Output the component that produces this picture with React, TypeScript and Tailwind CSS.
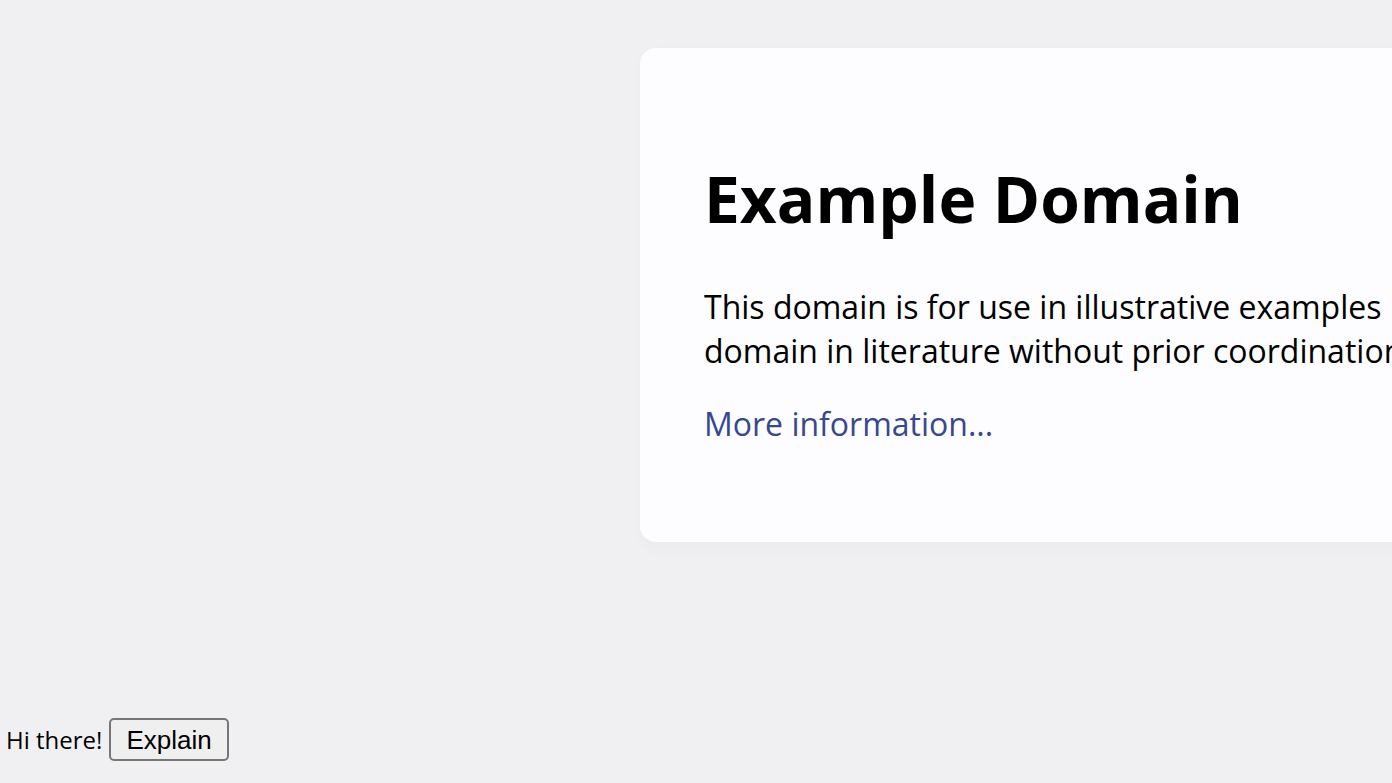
export default function App() {
  return (
    <div className="flex h-[783px] w-[1392px] flex-col overflow-hidden bg-[#f0f0f2] text-black">
      <div className="flex shrink-0 pt-[48px] pl-[640px]">
        <div
          className="box-content w-[1200px] shrink-0 rounded-[16px] bg-[#fdfdff] p-[64px] shadow-[4px_6px_14px_4px_rgba(0,0,0,0.02)]"
          style={{ fontFamily: '"Open Sans", sans-serif' }}
        >
          <h1 className="my-[43px] text-[64px] font-bold leading-[1.362]">Example Domain</h1>
          <p className="mt-[43px] mb-[30px] text-[32px] leading-[1.362]">
            This domain is for use in illustrative examples in documents. You may use this domain in literature without
            prior coordination or asking for permission.
          </p>
          <p className="mt-[30px] mb-[32px] text-[32px] leading-[1.362]">
            <a className="text-[#38488f]">More information...</a>
          </p>
        </div>
      </div>
      <div className="mt-auto flex items-baseline gap-[7px] pb-[22px] pl-[6px]">
        <span className="text-[24px] leading-[1.362]" style={{ fontFamily: '"Open Sans", sans-serif' }}>
          Hi there!
        </span>
        <button
          className="h-[43px] rounded-[5px] border-2 border-[#767676] bg-[#efefef] px-[15px] text-[26px] leading-none text-black"
          style={{ fontFamily: '"Liberation Sans", Arial, sans-serif' }}
        >
          Explain
        </button>
      </div>
    </div>
  );
}
